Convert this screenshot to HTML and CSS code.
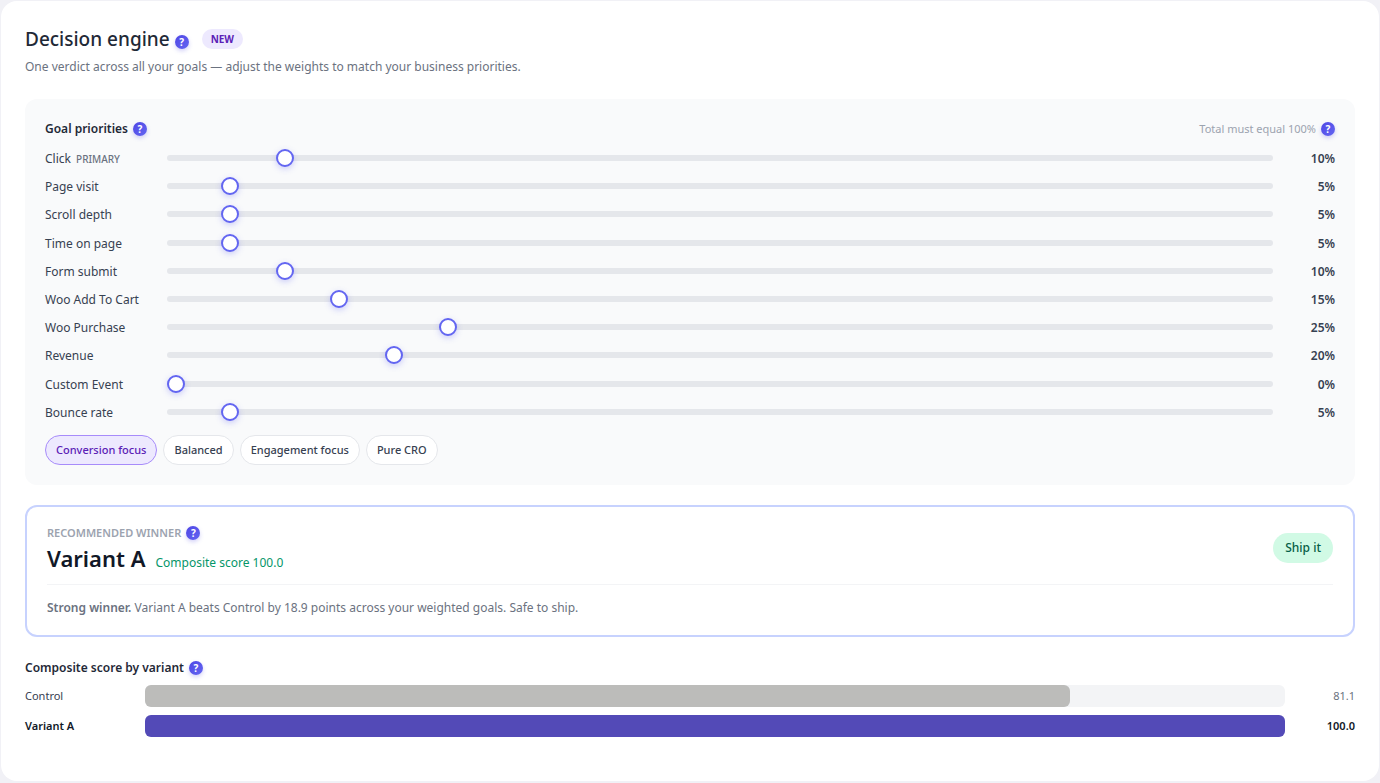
FILE: index.html
```html
<!DOCTYPE html>
<html lang="en">
<head>
<meta charset="utf-8">
<meta name="viewport" content="width=device-width, initial-scale=1">
<title>Decision engine</title>
<link rel="stylesheet" href="styles.css">
</head>
<body>
<main class="card">
  <header class="card-header">
    <div class="title-row">
      <h1 class="title">Decision engine</h1>
      <button class="help help-title" type="button" aria-label="About the decision engine">?</button>
      <span class="tag">NEW</span>
    </div>
    <p class="subtitle">One verdict across all your goals — adjust the weights to match your business priorities.</p>
  </header>

  <section class="panel">
    <div class="panel-head">
      <h2 class="heading">Goal priorities</h2>
      <button class="help" type="button" aria-label="About goal priorities">?</button>
      <span class="hint">Total must equal 100%</span>
      <button class="help" type="button" aria-label="About the total">?</button>
    </div>
    <div class="goals">
      <div class="goal"><label class="goal-name" for="g1">Click <span class="primary">PRIMARY</span></label><input class="slider" id="g1" type="range" value="10"><output class="goal-value" for="g1">10%</output></div>
      <div class="goal"><label class="goal-name" for="g2">Page visit</label><input class="slider" id="g2" type="range" value="5"><output class="goal-value" for="g2">5%</output></div>
      <div class="goal"><label class="goal-name" for="g3">Scroll depth</label><input class="slider" id="g3" type="range" value="5"><output class="goal-value" for="g3">5%</output></div>
      <div class="goal"><label class="goal-name" for="g4">Time on page</label><input class="slider" id="g4" type="range" value="5"><output class="goal-value" for="g4">5%</output></div>
      <div class="goal"><label class="goal-name" for="g5">Form submit</label><input class="slider" id="g5" type="range" value="10"><output class="goal-value" for="g5">10%</output></div>
      <div class="goal"><label class="goal-name" for="g6">Woo Add To Cart</label><input class="slider" id="g6" type="range" value="15"><output class="goal-value" for="g6">15%</output></div>
      <div class="goal"><label class="goal-name" for="g7">Woo Purchase</label><input class="slider" id="g7" type="range" value="25"><output class="goal-value" for="g7">25%</output></div>
      <div class="goal"><label class="goal-name" for="g8">Revenue</label><input class="slider" id="g8" type="range" value="20"><output class="goal-value" for="g8">20%</output></div>
      <div class="goal"><label class="goal-name" for="g9">Custom Event</label><input class="slider" id="g9" type="range" value="0"><output class="goal-value" for="g9">0%</output></div>
      <div class="goal"><label class="goal-name" for="g10">Bounce rate</label><input class="slider" id="g10" type="range" value="5"><output class="goal-value" for="g10">5%</output></div>
    </div>
    <div class="presets">
      <button class="preset preset-active" type="button">Conversion focus</button>
      <button class="preset" type="button">Balanced</button>
      <button class="preset" type="button">Engagement focus</button>
      <button class="preset" type="button">Pure CRO</button>
    </div>
  </section>

  <section class="winner">
    <div class="winner-top">
      <div>
        <div class="eyebrow-row">
          <span class="eyebrow">RECOMMENDED WINNER</span>
          <button class="help" type="button" aria-label="About the recommended winner">?</button>
        </div>
        <div class="winner-row">
          <h2 class="winner-name">Variant A</h2>
          <span class="winner-score">Composite score 100.0</span>
        </div>
      </div>
      <span class="verdict">Ship it</span>
    </div>
    <p class="summary"><strong class="strong">Strong winner.</strong> Variant A beats Control by 18.9 points across your weighted goals. Safe to ship.</p>
  </section>

  <section class="scores">
    <div class="scores-head">
      <h2 class="heading">Composite score by variant</h2>
      <button class="help" type="button" aria-label="About composite scores">?</button>
    </div>
    <div class="score">
      <span>Control</span>
      <div class="bar"><div class="fill" style="width: 81.1%"></div></div>
      <span class="score-value">81.1</span>
    </div>
    <div class="score score-best">
      <span>Variant A</span>
      <div class="bar"><div class="fill" style="width: 100%"></div></div>
      <span class="score-value">100.0</span>
    </div>
  </section>
</main>
</body>
</html>
```
FILE: styles.css
```css
* { box-sizing: border-box; }

body {
  margin: 0;
  padding: 1px;
  background: #f1f1f6;
  color: #1f2937;
  font-family: "Segoe UI", "Noto Sans", "Open Sans", sans-serif;
  font-size: 12px;
  line-height: 18px;
}

h1, h2, p { margin: 0; }
button { font-family: inherit; cursor: pointer; }

.card {
  min-height: calc(100vh - 3px);
  padding: 24px;
  background: #fff;
  border-radius: 16px;
}

.card-header { margin-bottom: 22px; }
.title-row { display: flex; align-items: center; }
.title { font-size: 19px; font-weight: 500; line-height: 28px; }
.subtitle { margin-top: 4px; color: #6b7280; line-height: 20px; }

.help {
  flex: none;
  width: 14px;
  height: 14px;
  margin-left: 5px;
  padding: 0;
  border: 0;
  border-radius: 50%;
  background: linear-gradient(135deg, #4f46e5, #6366f1);
  box-shadow: 0 2px 4px rgba(79, 70, 229, 0.25);
  color: #fff;
  font-size: 10px;
  font-weight: 700;
  line-height: 14px;
  text-align: center;
}
.help-title { margin-top: 6px; }

.tag {
  margin-left: 13px;
  padding: 0 9px;
  border-radius: 10px;
  background: #ede9fe;
  color: #5b21b6;
  font-size: 10px;
  font-weight: 700;
  line-height: 20px;
}

.panel {
  padding: 20px;
  border-radius: 12px;
  background: #f9fafb;
}
.panel-head { display: flex; align-items: center; height: 20px; margin-bottom: 8px; }
.heading { font-size: 12px; font-weight: 600; line-height: 18px; }
.hint { margin-left: auto; color: #9ca3af; font-size: 11px; }

.goals { display: grid; grid-auto-rows: 1fr; gap: 6px; min-height: 276px; }
.goal {
  display: grid;
  grid-template-columns: 110px 1fr 50px;
  align-items: center;
  gap: 12px;
}
.goal-name, .goal-value { padding-top: 2px; color: #374151; }
.goal-name { white-space: nowrap; }
.primary { margin-left: 2px; color: #6b7280; font-size: 10px; font-weight: 500; }
.goal-value { font-weight: 600; text-align: right; }

.slider {
  width: 100%;
  height: 6px;
  margin: 0;
  border-radius: 3px;
  background: #e5e7eb;
  appearance: none;
}
.slider::-webkit-slider-thumb {
  width: 18px;
  height: 18px;
  border: 2px solid #6366f1;
  border-radius: 50%;
  background: #fff;
  box-shadow: 0 2px 6px rgba(99, 102, 241, 0.3);
  appearance: none;
}

.presets { display: flex; flex-wrap: wrap; gap: 6px; margin-top: 12px; }
.preset {
  padding: 0 10px;
  border: 1px solid #e5e7eb;
  border-radius: 15px;
  background: #fff;
  color: #374151;
  font-size: 11px;
  font-weight: 500;
  line-height: 28px;
}
.preset-active { border-color: #a78bfa; background: #ede9fe; color: #5b21b6; }

.winner {
  margin-top: 20px;
  padding: 16px 20px 18px;
  border: 2px solid #c7d2fe;
  border-radius: 12px;
}
.winner-top {
  display: flex;
  align-items: center;
  justify-content: space-between;
  padding-bottom: 11px;
  border-bottom: 1px solid #f3f4f6;
}
.eyebrow-row { display: flex; align-items: center; height: 20px; }
.eyebrow { color: #9ca3af; font-size: 11px; font-weight: 600; }
.winner-row { display: flex; align-items: baseline; gap: 10px; }
.winner-name { color: #111827; font-size: 22px; font-weight: 600; line-height: 30px; }
.winner-score { color: #059669; }
.verdict {
  padding: 0 12px;
  border-radius: 15px;
  background: #d1fae5;
  color: #065f46;
  font-weight: 500;
  line-height: 30px;
}
.summary { margin-top: 14px; color: #6b7280; }
.strong { font-weight: 600; }

.scores { display: grid; gap: 8px; margin-top: 22px; }
.scores-head { display: flex; align-items: center; }
.score {
  display: grid;
  grid-template-columns: 110px 1fr 60px;
  align-items: center;
  gap: 10px;
  color: #374151;
  font-size: 11px;
}
.bar { height: 22px; border-radius: 6px; background: #f3f4f6; }
.fill { height: 100%; border-radius: 6px; background: #bcbcba; }
.score-value { color: #6b7280; text-align: right; }
.score-best, .score-best .score-value { color: #111827; font-weight: 600; }
.score-best .fill { background: #534ab7; }
```
